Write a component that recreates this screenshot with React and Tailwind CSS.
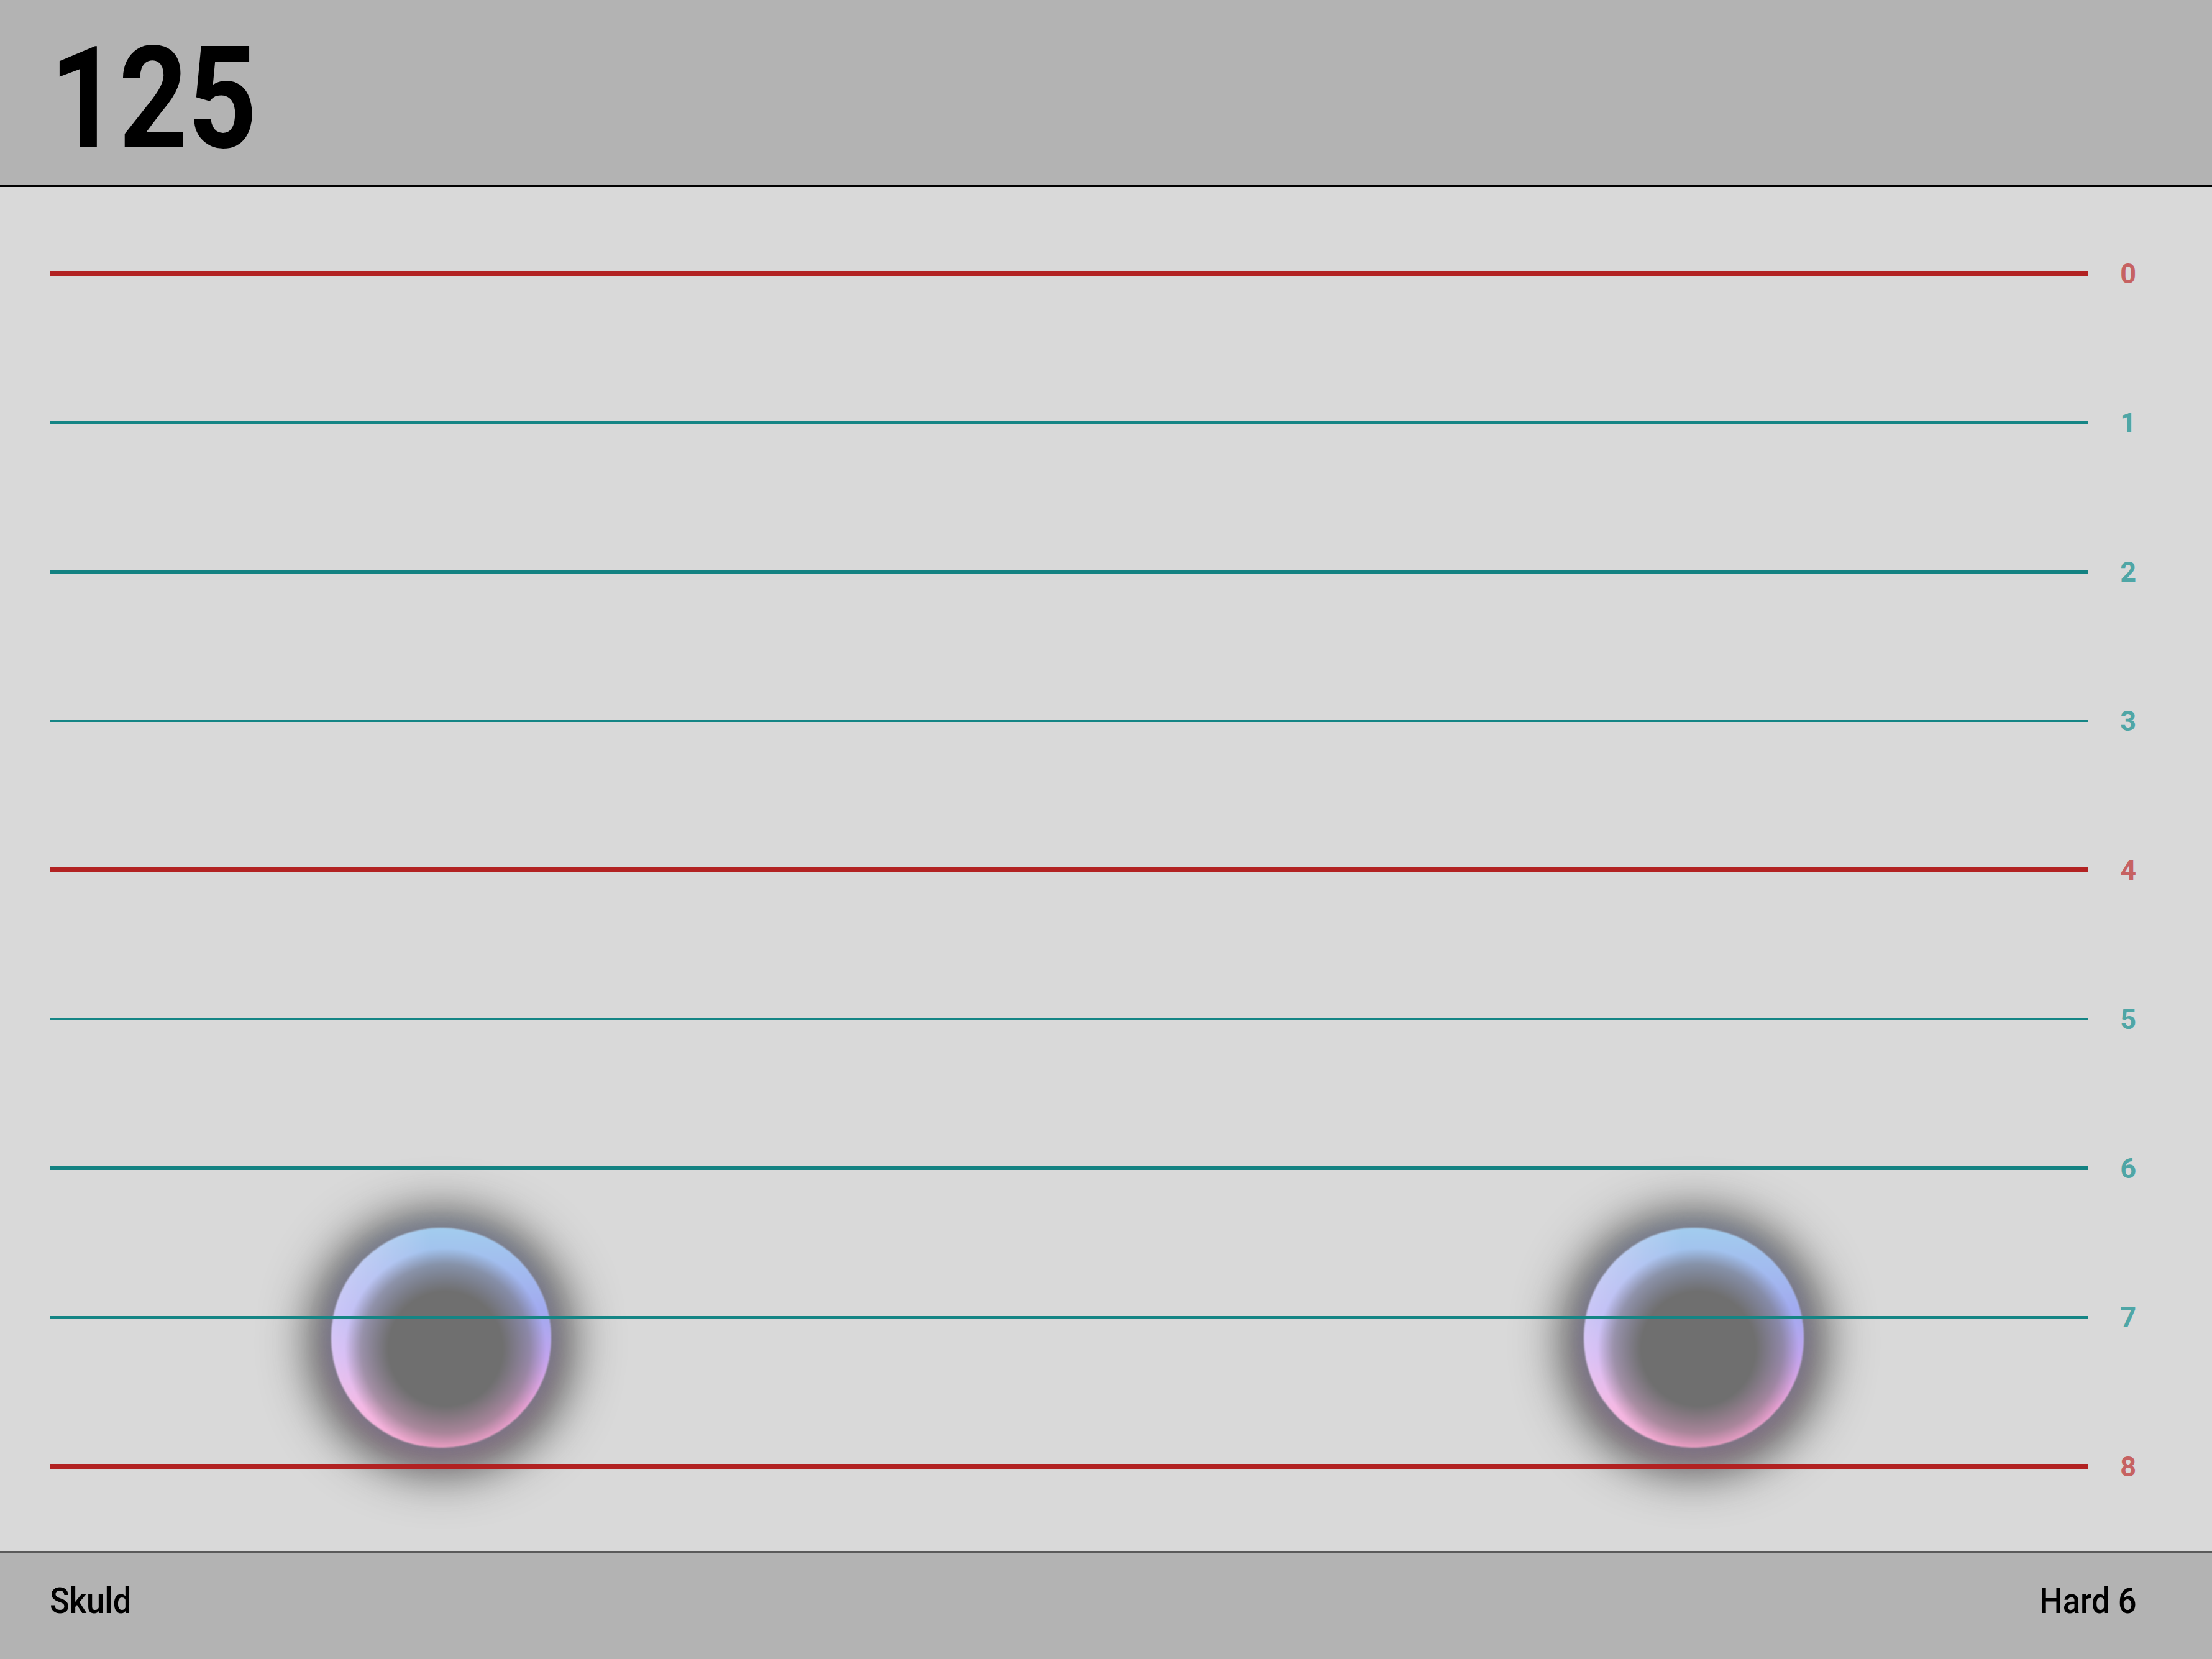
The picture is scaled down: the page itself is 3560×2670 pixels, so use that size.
import React from "react";

const lanes = [
  { n: 0, kind: "major" },
  { n: 1, kind: "minor" },
  { n: 2, kind: "mid" },
  { n: 3, kind: "minor" },
  { n: 4, kind: "major" },
  { n: 5, kind: "minor" },
  { n: 6, kind: "mid" },
  { n: 7, kind: "minor" },
  { n: 8, kind: "major" },
];

const lineClass = {
  major: "h-[8px] bg-[#b22222]",
  mid: "h-[6px] bg-[#138282]",
  minor: "h-[4px] bg-[#158585]",
};

const labelClass = {
  major: "text-[#c66262]",
  mid: "text-[#4fa6a6]",
  minor: "text-[#4fa6a6]",
};

// note bubbles sit on the staff canvas, under the lines
const notes = [
  { id: 1, pos: "left-[533px] top-[1675px]" },
  { id: 2, pos: "left-[2549px] top-[1675px]" },
];

const Note = ({ pos }) => (
  <div
    className={`absolute ${pos} w-[354px] h-[354px] rounded-full blur-[1px] shadow-[0_-6px_28px_6px_rgba(110,140,180,0.35),0_14px_30px_8px_rgba(165,110,150,0.35),0_8px_72px_38px_rgba(88,88,88,0.92)] bg-[radial-gradient(circle_at_52%_55%,#6f6f6f_0px,#6f6f6f_92px,rgba(111,111,111,0.55)_136px,rgba(111,111,111,0)_162px),linear-gradient(90deg,rgba(255,235,255,0.45)_0%,rgba(255,235,255,0)_45%),linear-gradient(180deg,#a2ccee_0%,#a2aaf0_38%,#c0a4ee_58%,#f0a2d8_82%,#f2a0c8_100%)]`}
  />
);

const App = () => {
  return (
    <div className="w-[3560px] h-[2670px] flex flex-col bg-[#d9d9d9] text-black font-['Roboto','Liberation_Sans',sans-serif]">
      {/* Header */}
      <header className="h-[301px] shrink-0 bg-[#b3b3b3] border-b-[3px] border-black pl-[80px] pt-[45px]">
        <span className="block w-fit origin-left scale-x-[0.85] text-[228px] leading-none font-bold">125</span>
      </header>

      {/* Staff */}
      <main className="relative flex-1 pt-[19px] pb-[16px]">
        {notes.map((note) => (
          <Note key={note.id} pos={note.pos} />
        ))}

        {lanes.map((lane) => (
          <div key={lane.n} className="relative z-10 h-[240px] flex items-center pl-[80px] pr-[122px]">
            <div className={`flex-1 ${lineClass[lane.kind]}`} />
            <span className={`w-[78px] text-right text-[45px] leading-none font-bold ${labelClass[lane.kind]}`}>
              {lane.n}
            </span>
          </div>
        ))}
      </main>

      {/* Footer */}
      <footer className="h-[174px] shrink-0 bg-[#b3b3b3] border-t-[3px] border-[#5a5a5a] flex items-center justify-between pl-[80px] pr-[122px] pb-[16px]">
        <span className="origin-left scale-x-[0.92] text-[57px] leading-none font-medium">Skuld</span>
        <span className="origin-right scale-x-[0.92] text-[57px] leading-none font-medium">Hard 6</span>
      </footer>
    </div>
  );
};

export default App;
